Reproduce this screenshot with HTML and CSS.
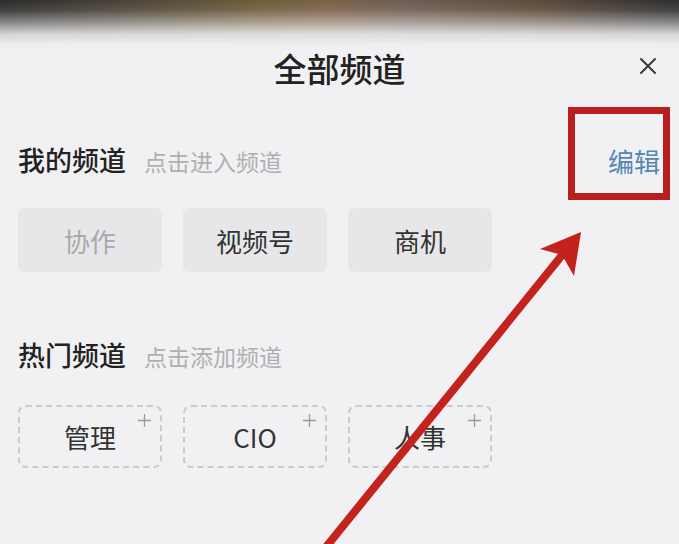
FILE: index.html
```html
<!DOCTYPE html>
<html lang="zh">
<head>
<meta charset="utf-8">
<link rel="stylesheet" href="styles.css">
</head>
<body>
<div class="page">
  <header class="titlebar">
    <span></span>
    <h1 class="title">全部频道</h1>
    <button class="close" aria-label="关闭">
      <svg width="18" height="18" viewBox="0 0 18 18"><path d="M2 2 L16 16 M16 2 L2 16" stroke="#3a3a3a" stroke-width="2" fill="none" stroke-linecap="round"/></svg>
    </button>
  </header>

  <section class="section">
    <div class="head">
      <div class="head-left">
        <span class="head-title">我的频道</span>
        <span class="head-hint">点击进入频道</span>
      </div>
      <span class="edit">编辑</span>
    </div>
    <div class="chips">
      <div class="chip disabled">协作</div>
      <div class="chip">视频号</div>
      <div class="chip">商机</div>
    </div>
  </section>

  <section class="section hot">
    <div class="head">
      <div class="head-left">
        <span class="head-title">热门频道</span>
        <span class="head-hint">点击添加频道</span>
      </div>
    </div>
    <div class="chips">
      <div class="chip add">管理<svg class="plus" width="13" height="13" viewBox="0 0 13 13"><path d="M6.5 0 V13 M0 6.5 H13" stroke="#9a9a9c" stroke-width="1.3"/></svg></div>
      <div class="chip add">CIO<svg class="plus" width="13" height="13" viewBox="0 0 13 13"><path d="M6.5 0 V13 M0 6.5 H13" stroke="#9a9a9c" stroke-width="1.3"/></svg></div>
      <div class="chip add">人事<svg class="plus" width="13" height="13" viewBox="0 0 13 13"><path d="M6.5 0 V13 M0 6.5 H13" stroke="#9a9a9c" stroke-width="1.3"/></svg></div>
    </div>
  </section>

  <div class="highlight"></div>
  <svg class="arrow" width="679" height="544" viewBox="0 0 679 544">
    <line x1="322" y1="552" x2="563" y2="254" stroke="#c4221d" stroke-width="8"/>
    <polygon points="581,232 540,249 562,255 574,276" fill="#c4221d"/>
  </svg>
</div>
</body>
</html>
```

FILE: styles.css
```css
* { box-sizing: border-box; margin: 0; padding: 0; }
html, body { width: 679px; height: 544px; overflow: hidden; }
body {
  font-family: "Noto Sans CJK SC", "Noto Sans", sans-serif;
  background: #f1f1f3;
}
.page {
  position: relative;
  width: 679px;
  height: 544px;
  overflow: hidden;
  background:
    linear-gradient(to bottom, rgba(241,241,243,0) 0px, rgba(241,241,243,0.1) 10px, rgba(241,241,243,0.45) 22px, rgba(241,241,243,0.85) 34px, rgba(241,241,243,0.98) 44px, #f1f1f3 52px),
    linear-gradient(to right, #2b2b2b 0%, #4a4236 18%, #6e5c3a 38%, #7a6045 48%, #6c5c52 60%, #5e4c3a 78%, #2e2e30 100%);
  background-color: #f1f1f3;
}
.titlebar {
  display: grid;
  grid-template-columns: 1fr auto 1fr;
  align-items: center;
  padding-top: 48px;
  height: 88px;
}
.title {
  font-size: 33px;
  font-weight: 500;
  line-height: 40px;
  color: #222;
}
.close {
  justify-self: end;
  margin-right: 22px;
  margin-top: -4px;
  border: 0;
  background: none;
  display: flex;
}
.section { padding: 0 0 0 18px; }
.head {
  display: flex;
  justify-content: space-between;
  align-items: center;
  height: 30px;
  margin-top: 57px;
}
.head-left { display: flex; align-items: center; gap: 18px; }
.head-title {
  font-size: 27px;
  font-weight: 500;
  color: #222;
  line-height: 30px;
}
.head-hint {
  font-size: 23px;
  color: #b0b0b2;
  line-height: 30px;
  margin-top: 2px;
}
.edit {
  font-size: 26px;
  color: #5587b5;
  margin-right: 19px;
}
.chips {
  display: flex;
  gap: 21px;
  margin-top: 33px;
}
.chip {
  position: relative;
  width: 144px;
  height: 64px;
  border-radius: 6px;
  background: #e7e7e9;
  display: flex;
  align-items: center;
  justify-content: center;
  font-size: 26px;
  color: #333;
}
.chip.disabled { color: #a9a9ab; }
.hot .head { margin-top: 68px; }
.hot .chips { margin-top: 35px; }
.chip.add {
  background: transparent;
  border: 2px dashed #cbcbcd;
  height: 63px;
  border-radius: 8px;
}
.plus {
  position: absolute;
  top: 7px;
  right: 9px;
}
.highlight {
  position: absolute;
  left: 568px;
  top: 107px;
  width: 102px;
  height: 93px;
  border: 7px solid #b81f1f;
}
.arrow {
  position: absolute;
  left: 0;
  top: 0;
}
```
